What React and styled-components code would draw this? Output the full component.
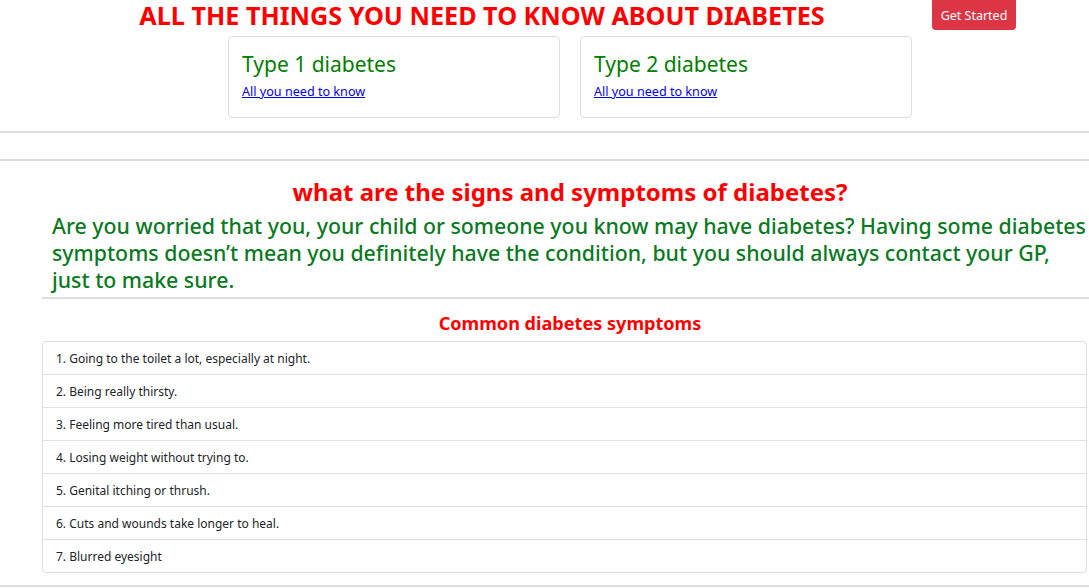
import React from "react";
import styled, { createGlobalStyle } from "styled-components";

const Global = createGlobalStyle`
  html, body { margin: 0; padding: 0; background: #fff; overflow-x: hidden; }
  body { font-family: "Noto Sans", "Open Sans", sans-serif; color: #212529; }
  * { box-sizing: border-box; }
`;

const Page = styled.div`
  width: 1089px;
`;

const Header = styled.header`
  display: flex;
  align-items: flex-start;
  height: 36px;
`;

const TitleBox = styled.div`
  width: 932px;
  padding-left: 32px;
  text-align: center;
`;

const Title = styled.h1`
  margin: 0;
  padding-top: 0;
  font-size: 25.2px;
  line-height: 30px;
  font-weight: 700;
  color: #ff0000;
`;

const Button = styled.button`
  height: 30px;
  width: 84px;
  margin: 0;
  border: none;
  border-radius: 0 0 4px 4px;
  background: #dc3545;
  color: #fff;
  font-family: inherit;
  font-size: 12.5px;
  padding: 0;
`;

const CardRow = styled.div`
  display: flex;
  gap: 20px;
  padding-left: 228px;
`;

const Card = styled.div`
  width: 332px;
  height: 82px;
  border: 1px solid #dedede;
  border-radius: 4px;
  padding: 13px 13px;
`;

const CardTitle = styled.h3`
  margin: 0;
  font-size: 21px;
  line-height: 28px;
  font-weight: 400;
  color: #008000;
`;

const CardLink = styled.a`
  display: block;
  margin-top: 5px;
  font-size: 12.6px;
  color: #0000ee;
  text-decoration: underline;
`;

const Rule = styled.hr`
  margin: ${(p) => p.$top}px 0 0;
  border: none;
  border-top: 2px solid #dddddd;
  height: 0;
`;

const Section = styled.section`
  width: 1056px;
  margin-left: 42px;
  padding-top: 17px;
`;

const SignsTitle = styled.h2`
  margin: 0;
  text-align: center;
  font-size: 24px;
  line-height: 28px;
  font-weight: 700;
  color: #ff0000;
`;

const Lead = styled.p`
  margin: 0;
  padding: 6px 11px 4px 10px;
  font-size: 21.3px;
  line-height: 27px;
  font-weight: 500;
  color: #0a7a1f;
  border-bottom: 2px solid #dddddd;
`;

const ListTitle = styled.h4`
  margin: 0;
  padding-top: 12px;
  text-align: center;
  font-size: 18.1px;
  line-height: 24px;
  font-weight: 700;
  color: #ff0000;
`;

const List = styled.ul`
  list-style: none;
  margin: 6px 0 0;
  padding: 0;
  width: 1045px;
  border: 1px solid #dfdfdf;
  border-radius: 4px;
`;

const Item = styled.li`
  height: 33px;
  display: flex;
  align-items: center;
  padding: 0 13px;
  font-size: 12px;
  color: #212529;
  &:not(:last-child) { border-bottom: 1px solid #dfdfdf; }
  &:last-child { height: 32px; }
`;

const symptoms = [
  "1. Going to the toilet a lot, especially at night.",
  "2. Being really thirsty.",
  "3. Feeling more tired than usual.",
  "4. Losing weight without trying to.",
  "5. Genital itching or thrush.",
  "6. Cuts and wounds take longer to heal.",
  "7. Blurred eyesight",
];

export default function App() {
  return (
    <Page>
      <Global />
      <Header>
        <TitleBox>
          <Title>ALL THE THINGS YOU NEED TO KNOW ABOUT DIABETES</Title>
        </TitleBox>
        <Button>Get Started</Button>
      </Header>
      <CardRow>
        <Card>
          <CardTitle>Type 1 diabetes</CardTitle>
          <CardLink href="#">All you need to know</CardLink>
        </Card>
        <Card>
          <CardTitle>Type 2 diabetes</CardTitle>
          <CardLink href="#">All you need to know</CardLink>
        </Card>
      </CardRow>
      <Rule $top={13} />
      <Rule $top={26} />
      <Section>
        <SignsTitle>what are the signs and symptoms of diabetes?</SignsTitle>
        <Lead>
          Are you worried that you, your child or someone you know may have diabetes? Having some diabetes symptoms doesn’t mean you definitely have the condition, but you should always contact your GP, just to make sure.
        </Lead>
        <ListTitle>Common diabetes symptoms</ListTitle>
        <List>
          {symptoms.map((s) => (
            <Item key={s}>{s}</Item>
          ))}
        </List>
      </Section>
      <Rule $top={12} />
    </Page>
  );
}
